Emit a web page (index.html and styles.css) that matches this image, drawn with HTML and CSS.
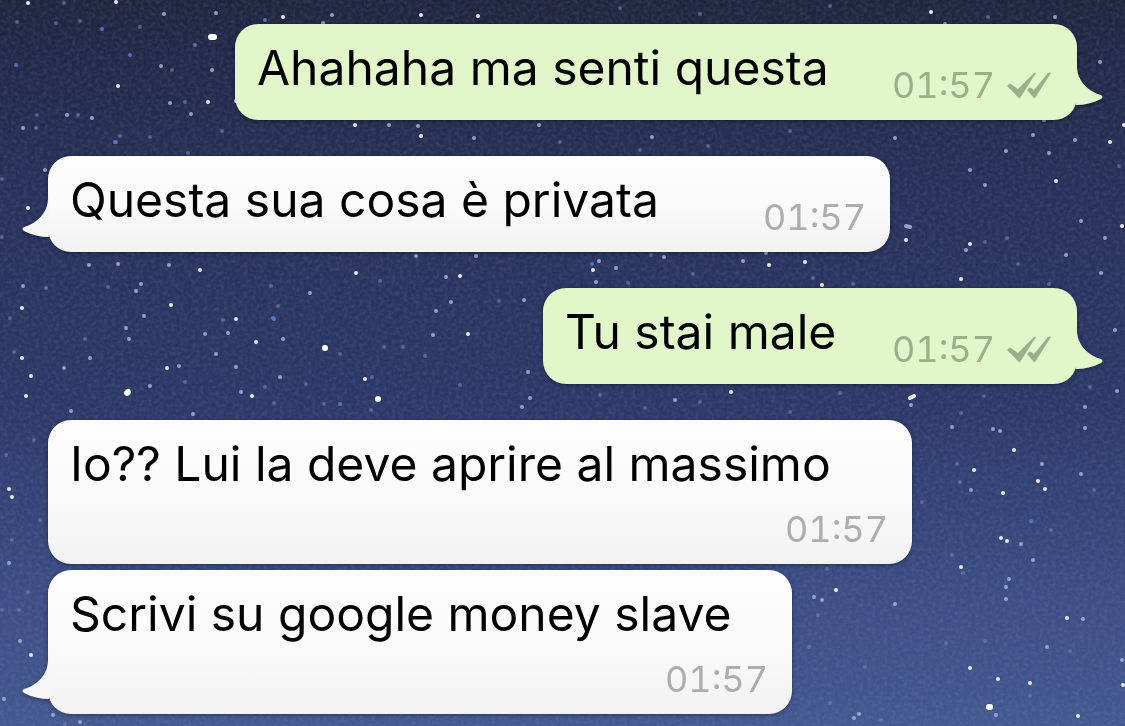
FILE: index.html
```
<!DOCTYPE html>
<html lang="it">
<head>
  <meta charset="UTF-8">
  <meta name="viewport" content="width=device-width, initial-scale=1.0">
  <title>Chat</title>
  <link rel="stylesheet" href="styles.css">
</head>
<body>
  <!-- Night sky wallpaper -->
  <svg class="sky" viewBox="0 0 1125 726" preserveAspectRatio="xMidYMid slice" aria-hidden="true">
    <filter id="grain" x="0" y="0" width="100%" height="100%">
      <feTurbulence type="fractalNoise" baseFrequency="0.25" numOctaves="3" seed="4"/>
      <feColorMatrix values="0 0 0 0 0.4  0 0 0 0 0.45  0 0 0 0 0.65  1 0 0 0 -0.35"/>
    </filter>
    <rect width="1125" height="726" filter="url(#grain)" opacity="0.25"/>
    <path class="star dim" d="M140 27h0M64 3h0M172 70h0M185 102h0M78 115h0M37 115h0M120 136h0M150 137h0M188 153h0M222 131h0M17 22h0M56 23h0M80 21h0M1119 166h0M985 242h0M1007 238h0M1049 284h0M1018 264h0M628 283h0M651 255h0M813 278h0M853 284h0M693 274h0M108 287h0M271 286h0M278 306h0M340 354h0M380 281h0M499 301h0M372 377h0M371 410h0M324 404h0M306 384h0M274 403h0M85 339h0M10 318h0M14 352h0M957 464h0M960 482h0M1090 387h0M984 396h0M961 413h0M922 502h0M1051 530h0M952 555h0M1094 490h0M963 573h0M809 647h0M818 615h0M865 667h0M946 643h0M985 641h0M1070 651h0M1030 696h0M830 703h0M881 720h0M827 569h0M2 610h0M19 610h0M65 724h0M2 179h0M2 237h0M116 142h0M988 17h0M560 142h0M640 150h0M708 146h0M790 131h0M600 395h0M645 408h0M700 402h0M790 412h0M840 393h0M620 8h0M700 14h0M830 6h0M34 440h0M6 455h0M40 520h0M12 540h0M28 592h0M185 382h0M223 320h0M265 387h0M403 347h0M425 356h0M460 385h0M384 347h0"/>
    <path class="star blue" d="M102 29h0M195 45h0M130 55h0M16 65h0M36 128h0M115 142h0M265 20h0M592 264h0M46 288h0M274 319l-1 -1M340 404h0M1031 521h0"/>
    <path class="star" d="M164 14h0M170 103h0M92 118h0M212 70h0M161 66h0M191 114h0M67 115h0M23 128h0M216 13h0M332 15h0M323 23h0M389 125h0M418 126h0M474 138h0M539 125h0M895 138h0M1033 135h0M1006 151h0M1049 153h0M1075 140h0M970 170h0M985 185h0M1081 221h0M906 226l4 1M966 250h0M1105 238h0M1066 255h0M1101 273h0M599 261h0M616 268h0M596 282h0M664 257h0M743 261h0M766 253h0M89 265h0M118 264h0M169 265h0M23 286h0M136 291h0M141 284h0M144 316h0M126 328h0M129 339h0M228 333h0M205 334h0M283 339h0M310 293h0M416 256h0M476 256h0M446 277h0M451 302h0M436 311h0M433 335h0M524 300h0M528 372h0M530 398h0M522 407h0M280 377h0M241 392h0M236 367h0M216 354h0M193 414h0M179 366h0M150 386h0M90 358h0M64 368h0M71 411h0M911 405h0M952 427h0M993 429h0M1000 431h0M971 490h0M1042 464h0M1081 474h0M1085 407h0M1085 428h0M1117 391h0M1021 544h0M1033 560h0M1009 579h0M1006 587h0M1006 599h0M814 597h0M822 600h0M895 604h0M1083 619h0M1047 647h0M996 715h0M1122 660h0M859 714h0M854 718h0M9 563h0M20 641h0M4 699h0M53 715h0M80 722h0M45 170h0M945 24h0M1055 17h0M1044 120h0M652 137h0M675 400h0M1100 62h0M1115 330h0"/>
    <path class="star bright" d="M28 3h0M116 2h0M118 86h0M208 102h0M236 101h0M283 17h0M421 15h0M478 16h0M421 136h0M355 125h0M1110 142h0M1124 125h0M1056 181h0M1122 226h0M906 240h0M970 244h0M961 279h0M593 270h0M769 265h0M805 262h0M822 285h0M200 270h0M356 273h0M22 308h0M171 305h0M236 319h0M256 342h0M460 276h0M468 334h0M365 379h0M252 396h0M167 368h0M22 358h0M31 376h0M26 396h0M910 398l4 -2M1014 450h0M974 470h0M1003 493h0M1038 481h0M1045 489h0M1001 538h0M1007 541h0M961 567h0M836 590h0M1067 618h0M970 668h0M998 679h0M1030 683h0M1078 716h0M1123 685h0M31 655h0M28 208h0M9 489h0M12 497h0M931 12h0M731 392h0"/>
    <path class="star big" d="M211 37h3M325 348h0M378 399h0M127 393l1 -1M989 707h1"/>
  </svg>

  <!-- Shared shapes -->
  <svg class="defs" aria-hidden="true">
    <symbol id="tail" viewBox="0 0 27 42">
      <path d="M0 0H1V3C1 17 11 28 25 32Q28 34 25 36C17 40 9 42 0 42Z"/>
    </symbol>
    <symbol id="ticks" viewBox="0 0 44 26">
      <path d="M0 14L2 12Q3 11 4 12L11 17L27 1Q28 0 29 1L13 26H12ZM20 18L22 16Q23 15 24 16L27 18L41 1Q43 0 44 1L28 26H27Z"/>
    </symbol>
  </svg>

  <main class="chat">
    <div class="message sent long">
      <p class="text">Ahahaha ma senti questa</p>
      <span class="meta"><time>01:57</time><svg class="ticks" role="img" aria-label="Consegnato"><use href="#ticks"/></svg></span>
      <svg class="tail" aria-hidden="true"><use href="#tail"/></svg>
    </div>

    <div class="message received long">
      <p class="text">Questa sua cosa è privata</p>
      <span class="meta"><time>01:57</time></span>
      <svg class="tail" aria-hidden="true"><use href="#tail"/></svg>
    </div>

    <div class="message sent short">
      <p class="text">Tu stai male</p>
      <span class="meta"><time>01:57</time><svg class="ticks" role="img" aria-label="Consegnato"><use href="#ticks"/></svg></span>
      <svg class="tail" aria-hidden="true"><use href="#tail"/></svg>
    </div>

    <div class="message received stacked wide">
      <p class="text">Io?? Lui la deve aprire al massimo</p>
      <span class="meta"><time>01:57</time></span>
    </div>

    <div class="message received stacked medium grouped">
      <p class="text">Scrivi su google money slave</p>
      <span class="meta"><time>01:57</time></span>
      <svg class="tail" aria-hidden="true"><use href="#tail"/></svg>
    </div>
  </main>
</body>
</html>
```
FILE: styles.css
```
/* General Styles */
* {
  box-sizing: border-box;
}

body {
  margin: 0;
  min-height: 100vh;
  font-family: Inter, "Liberation Sans", sans-serif;
  color: #000;
  background: linear-gradient(#20253f 0%, #28325c 28%, #2c3867 55%, #3a4c83 80%, #435990 100%) fixed;
  overflow-x: hidden;
}

/* Wallpaper */
.sky {
  position: fixed;
  inset: 0;
  z-index: -1;
  width: 100%;
  height: 100%;
}

.star {
  fill: none;
  stroke: #a9b2dc;
  stroke-width: 4;
  stroke-linecap: round;
  opacity: 0.85;
}

.star.dim {
  stroke: #7683b8;
  opacity: 0.6;
}

.star.blue {
  stroke: #5f7fd0;
}

.star.bright {
  stroke: #ece6e6;
  stroke-width: 4;
  opacity: 1;
}

.star.big {
  stroke: #fff;
  stroke-width: 6;
  opacity: 1;
}

.defs {
  position: absolute;
  width: 0;
  height: 0;
}

/* Messages */
.chat {
  display: flex;
  flex-direction: column;
  gap: 36px;
  padding: 24px 48px 12px;
}

.message {
  position: relative;
  display: flex;
  align-items: flex-end;
  justify-content: space-between;
  max-width: 100%;
  min-height: 96px;
  padding: 12px 24px 12px 22px;
  border-radius: 23px;
  filter: drop-shadow(0 1px 2px rgba(0, 0, 0, 0.4));
}

.sent {
  align-self: flex-end;
  padding-right: 26px;
  background: #e1f7ca;
  fill: #e1f7ca;
}

.received {
  align-self: flex-start;
  background: linear-gradient(#fdfdfd 0%, #fafafa 50%, #f2f2f2 100%);
  fill: #f6f6f6;
}

.stacked {
  flex-direction: column;
  align-items: stretch;
  min-height: 144px;
}

.grouped {
  margin-top: -30px;
}

.long {
  width: 842px;
}

.short {
  width: 534px;
}

.wide {
  width: 864px;
}

.medium {
  width: 744px;
}

.text {
  margin: 0;
  align-self: flex-start;
  font-size: 48px;
  line-height: 64px;
}

.meta {
  display: flex;
  align-items: center;
  justify-content: flex-end;
  gap: 12px;
  font-size: 36px;
  font-variant-numeric: tabular-nums;
  line-height: 46px;
  color: #adadad;
}

.sent .meta {
  color: #9cae8c;
}

.ticks {
  width: 44px;
  height: 26px;
  fill: currentColor;
}

.tail {
  position: absolute;
  bottom: 15px;
  width: 27px;
  height: 42px;
}

.sent .tail {
  left: calc(100% - 1px);
}

.received .tail {
  right: calc(100% - 1px);
  transform: scaleX(-1);
}
```
